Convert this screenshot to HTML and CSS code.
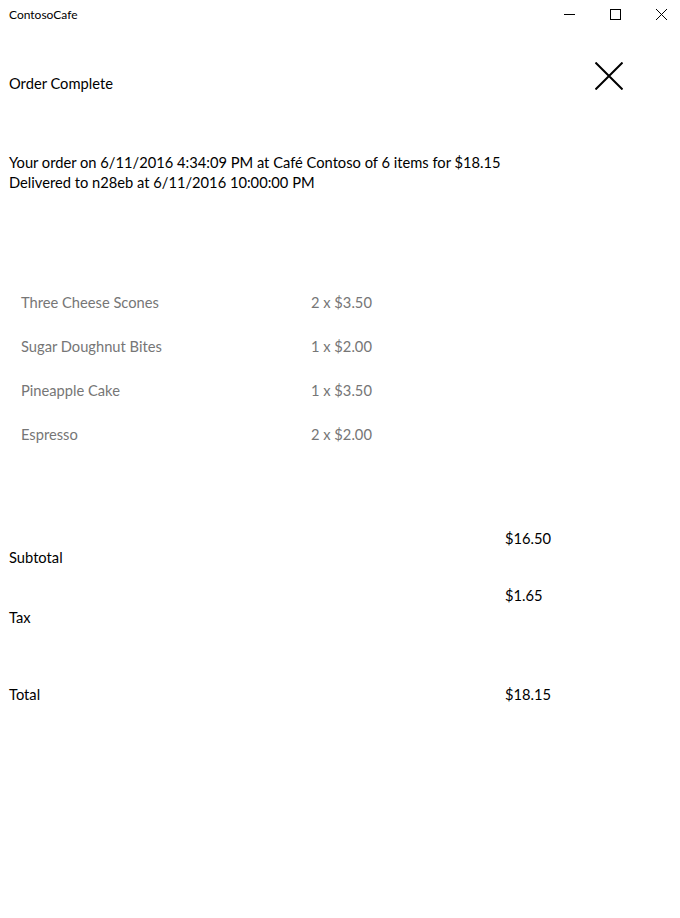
FILE: index.html
```html
<!DOCTYPE html>
<html>
<head>
<meta charset="utf-8">
<link rel="stylesheet" href="styles.css">
</head>
<body>
<div class="titlebar">
  <span class="app-name">ContosoCafe</span>
  <div class="caption-buttons">
    <span class="cap-btn"><svg width="11" height="11" viewBox="0 0 11 11"><path d="M0 5.5H11" stroke="#000" stroke-width="1"/></svg></span>
    <span class="cap-btn"><svg width="11" height="11" viewBox="0 0 11 11"><rect x="0.5" y="0.5" width="10" height="10" fill="none" stroke="#000" stroke-width="1"/></svg></span>
    <span class="cap-btn"><svg width="11" height="11" viewBox="0 0 11 11"><path d="M0 0L11 11M11 0L0 11" stroke="#000" stroke-width="1"/></svg></span>
  </div>
</div>
<div class="page">
  <div class="header">
    <span class="heading">Order Complete</span>
    <svg class="close-big" width="28" height="28" viewBox="0 0 28 28"><path d="M0.5 0.5L27.5 27.5M27.5 0.5L0.5 27.5" stroke="#000" stroke-width="2"/></svg>
  </div>
  <div class="summary">
    <div>Your order on 6/11/2016 4:34:09 PM at Café Contoso of 6 items for $18.15</div>
    <div>Delivered to n28eb at 6/11/2016 10:00:00 PM</div>
  </div>
  <div class="items">
    <div class="item"><span class="item-name">Three Cheese Scones</span><span>2 x $3.50</span></div>
    <div class="item"><span class="item-name">Sugar Doughnut Bites</span><span>1 x $2.00</span></div>
    <div class="item"><span class="item-name">Pineapple Cake</span><span>1 x $3.50</span></div>
    <div class="item"><span class="item-name">Espresso</span><span>2 x $2.00</span></div>
  </div>
  <div class="totals">
    <div class="trow subtotal"><span class="tlabel">Subtotal</span><span class="tval">$16.50</span></div>
    <div class="trow tax"><span class="tlabel">Tax</span><span class="tval">$1.65</span></div>
    <div class="trow total"><span class="tlabel">Total</span><span class="tval">$18.15</span></div>
  </div>
</div>
</body>
</html>
```
FILE: styles.css
```css
html, body {
  margin: 0;
  background: #fff;
  font-family: "Lato", "Noto Sans", sans-serif;
  color: #000;
}
.titlebar {
  height: 28px;
  display: flex;
  align-items: center;
  justify-content: space-between;
}
.app-name {
  font-size: 12px;
  padding-left: 9px;
}
.caption-buttons {
  display: flex;
  margin-right: -4px;
}
.cap-btn {
  width: 46px;
  height: 28px;
  display: flex;
  align-items: center;
  justify-content: center;
}
.page {
  padding: 0 9px;
  font-size: 14.7px;
  line-height: 20px;
}
.header {
  display: flex;
  justify-content: space-between;
  align-items: flex-start;
  height: 124px;
}
.heading {
  margin-top: 45px;
}
.close-big {
  margin-top: 34px;
  margin-right: 48px;
}
.items {
  margin-top: 88px;
  padding-left: 12px;
  color: #767676;
}
.item {
  display: flex;
  height: 44px;
  align-items: center;
}
.item-name {
  width: 290px;
}
.totals {
  margin-top: 72px;
}
.trow {
  display: flex;
  align-items: flex-start;
}
.tlabel {
  width: 496px;
}
.subtotal { height: 57px; }
.subtotal .tlabel { padding-top: 19px; }
.tax { height: 99px; }
.tax .tlabel { padding-top: 22px; }
```
